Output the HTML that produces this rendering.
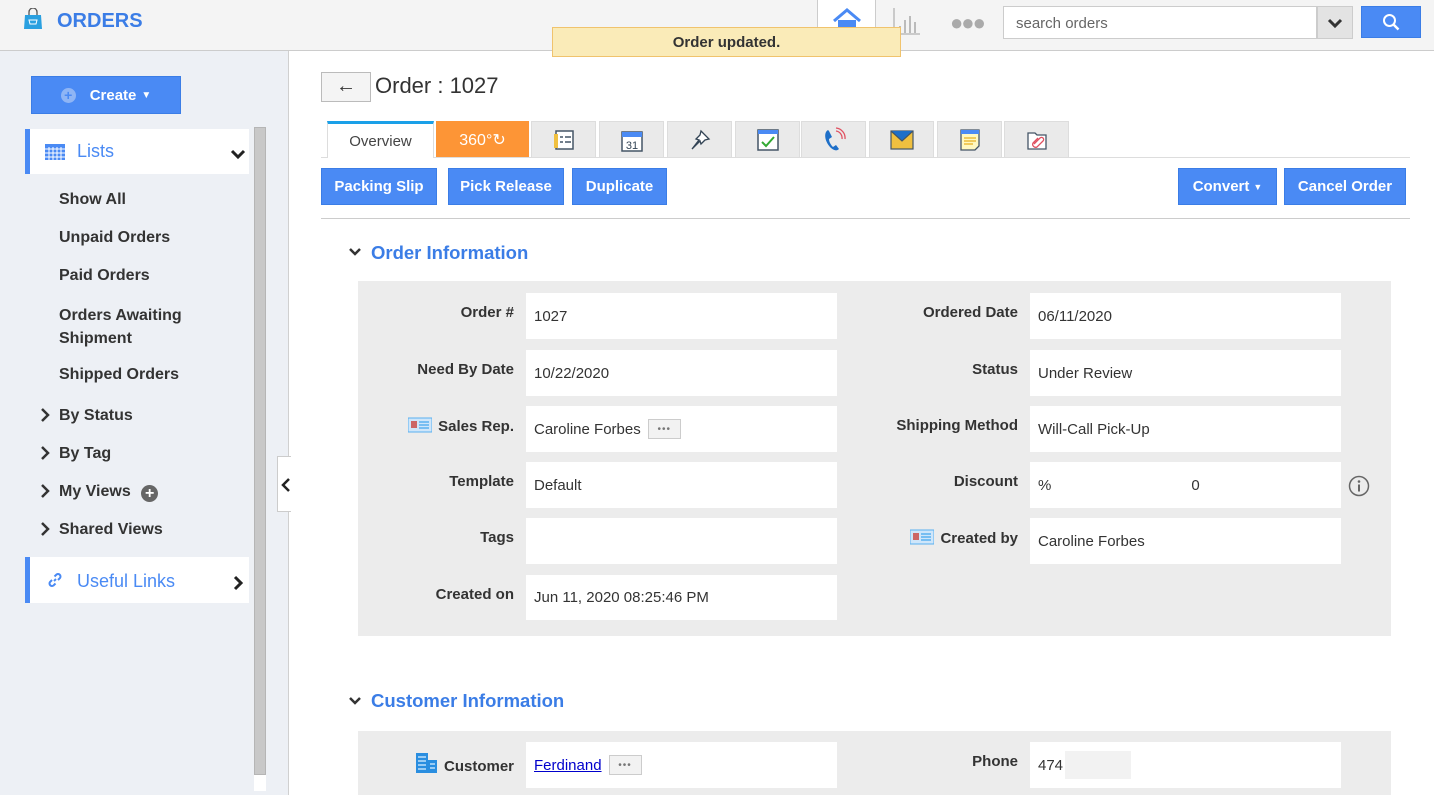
<!DOCTYPE html>
<html><head><meta charset="utf-8"><style>
*{box-sizing:border-box;margin:0;padding:0}
body{width:1434px;height:795px;overflow:hidden;font-family:"Liberation Sans",Arial,sans-serif;background:#fff;position:relative;color:#333}
.a{position:absolute}
.hdr{left:0;top:0;width:1434px;height:51px;background:#f4f4f4;border-bottom:1px solid #ccc}
.side{left:0;top:51px;width:289px;height:744px;background:#edf0f5;border-right:1px solid #d0d0d0}
.btn{position:absolute;background:#4a8af4;border:1px solid #3b7de6;color:#fff;font-weight:bold;font-size:15px;display:flex;align-items:center;justify-content:center}
.nav{position:absolute;left:59px;font-size:16px;font-weight:bold;color:#333}
.chev{position:absolute;left:40px}
.tab{position:absolute;top:121px;height:36px;background:#eaeaea;border:1px solid #ddd;border-bottom:none;display:flex;align-items:center;justify-content:center}
.lbl{position:absolute;font-size:15px;font-weight:bold;color:#333;text-align:right}
.val{position:absolute;background:#fff;font-size:15px;color:#333;padding-left:8px;display:flex;align-items:center}
.dots{display:inline-flex;align-items:center;justify-content:center;width:33px;height:20px;border:1px solid #ccc;background:#f2f2f2;margin-left:7px;font-size:10px;color:#777;letter-spacing:1px}
.sec{position:absolute;left:371px;font-size:18.5px;color:#3b7de6;font-weight:bold}
</style></head><body>
<div class="a hdr"></div>
<svg class="a" style="left:22px;top:8px" width="22" height="22" viewBox="0 0 22 22"><path d="M7 7V4a4 4 0 0 1 8 0v3" fill="none" stroke="#555" stroke-width="1.3"/><path d="M3 7h16l1 14H2z" fill="#2aa0e0"/><path d="M7 12h8l-1 4H8z" fill="none" stroke="#fff" stroke-width="1"/></svg>
<div class="a" style="left:57px;top:10px;font-size:20px;font-weight:bold;color:#3b7de6">ORDERS</div>
<div class="a" style="left:817px;top:0;width:59px;height:50px;background:#fff;border-left:1px solid #ccc;border-right:1px solid #ccc"></div>
<svg class="a" style="left:832px;top:8px" width="30" height="22" viewBox="0 0 30 22"><path d="M2 13L15 2l13 11" fill="none" stroke="#4a8af4" stroke-width="3"/><path d="M6 12h18v10H6z" fill="#4a8af4"/></svg>
<svg class="a" style="left:891px;top:8px" width="30" height="28"><path d="M3 0v26h26" fill="none" stroke="#bbb" stroke-width="1.5"/><path d="M9 18v7M14 12v13M19 8v17M24 14v11" stroke="#bbb" stroke-width="2"/></svg>
<div class="a" style="left:950px;top:10px;font-size:22px;color:#aaa;letter-spacing:-2px">●●●</div>
<div class="a" style="left:1003px;top:6px;width:314px;height:33px;background:#fff;border:1px solid #ccc;font-size:15px;color:#666;padding:8px 12px">search orders</div>
<div class="a" style="left:1317px;top:6px;width:36px;height:33px;background:#e3e3e3;border:1px solid #ccc"></div>
<svg class="a" style="left:1327px;top:17px" width="16" height="12"><path d="M2 3l6 6 6-6" fill="none" stroke="#333" stroke-width="3"/></svg>
<div class="btn" style="left:1361px;top:6px;width:60px;height:32px"><svg width="18" height="18"><circle cx="7.5" cy="7.5" r="5.5" fill="none" stroke="#fff" stroke-width="2"/><path d="M11.5 11.5l5 5" stroke="#fff" stroke-width="2.5"/></svg></div>
<div class="a" style="left:552px;top:27px;width:349px;height:30px;background:#faebb8;border:1px solid #f0c36d;font-size:15px;font-weight:bold;color:#333;text-align:center;line-height:30px">Order updated.</div>

<div class="a side"></div>
<div class="btn" style="left:31px;top:76px;width:150px;height:38px"><span style="display:inline-block;width:15px;height:15px;border-radius:50%;background:#8fb5f5;color:#4a8af4;font-size:14px;line-height:15px;text-align:center;margin-right:14px">+</span>Create <span style="font-size:10px;margin-left:5px">▼</span></div>
<div class="a" style="left:25px;top:129px;width:224px;height:45px;background:#fff;border-left:5px solid #4a8af4"></div>
<svg class="a" style="left:45px;top:144px" width="20" height="16"><rect x="0" y="0" width="20" height="16" fill="#4a8af4"/><path d="M0 5h20M0 9h20M0 13h20M4 3v13M8 3v13M12 3v13M16 3v13" stroke="#fff" stroke-width="1"/></svg>
<div class="a" style="left:77px;top:141px;font-size:18px;color:#4a8af4">Lists</div>
<svg class="a" style="left:230px;top:149px" width="16" height="12"><path d="M2 2l6 6 6-6" fill="none" stroke="#222" stroke-width="3"/></svg>
<div class="nav" style="top:191px">Show All</div>
<div class="nav" style="top:229px">Unpaid Orders</div>
<div class="nav" style="top:267px">Paid Orders</div>
<div class="nav" style="top:304px;line-height:23px">Orders Awaiting<br>Shipment</div>
<div class="nav" style="top:366px">Shipped Orders</div>
<svg class="chev" style="top:408px" width="10" height="14"><path d="M2 1l6 6-6 6" fill="none" stroke="#333" stroke-width="2.5"/></svg>
<div class="nav" style="top:407px">By Status</div>
<svg class="chev" style="top:446px" width="10" height="14"><path d="M2 1l6 6-6 6" fill="none" stroke="#333" stroke-width="2.5"/></svg>
<div class="nav" style="top:445px">By Tag</div>
<svg class="chev" style="top:484px" width="10" height="14"><path d="M2 1l6 6-6 6" fill="none" stroke="#333" stroke-width="2.5"/></svg>
<div class="nav" style="top:483px">My Views <span style="display:inline-block;width:17px;height:17px;border-radius:50%;background:#666;color:#fff;text-align:center;line-height:17px;font-size:16px;margin-left:6px;vertical-align:-2px">+</span></div>
<svg class="chev" style="top:522px" width="10" height="14"><path d="M2 1l6 6-6 6" fill="none" stroke="#333" stroke-width="2.5"/></svg>
<div class="nav" style="top:521px">Shared Views</div>
<div class="a" style="left:25px;top:557px;width:224px;height:46px;background:#fff;border-left:5px solid #4a8af4"></div>
<svg class="a" style="left:46px;top:571px" width="18" height="18"><path d="M8 10l2-2M6 9l-2 2a2.5 2.5 0 0 0 3.5 3.5l2-2M12 9l2-2a2.5 2.5 0 0 0-3.5-3.5l-2 2" fill="none" stroke="#4a8af4" stroke-width="2"/></svg>
<div class="a" style="left:77px;top:571px;font-size:18px;color:#4a8af4">Useful Links</div>
<svg class="a" style="left:233px;top:575px" width="12" height="16"><path d="M2 2l6 6-6 6" fill="none" stroke="#222" stroke-width="3"/></svg>
<div class="a" style="left:254px;top:127px;width:12px;height:648px;background:#c8c8c8;border:1px solid #b5b5b5"></div>
<div class="a" style="left:254px;top:775px;width:12px;height:16px;background:#fff"></div>
<div class="a" style="left:277px;top:456px;width:14px;height:56px;background:#fff;border:1px solid #ccc;border-right:none"></div>
<svg class="a" style="left:281px;top:478px" width="10" height="14"><path d="M8 1L2 7l6 6" fill="none" stroke="#222" stroke-width="2.5"/></svg>

<div class="a" style="left:321px;top:72px;width:50px;height:30px;background:#f4f4f4;border:1px solid #bbb;font-size:20px;text-align:center;line-height:26px">←</div>
<div class="a" style="left:375px;top:73px;font-size:22px;color:#333">Order : 1027</div>

<div class="a" style="left:321px;top:157px;width:1089px;height:1px;background:#ddd"></div>
<div class="tab" style="left:327px;width:107px;background:#fff;border-top:3px solid #1aa0e8;height:37px;font-size:15px;color:#444">Overview</div>
<div class="tab" style="left:436px;width:93px;background:#fd9536;border-color:#fd9536;color:#fff;font-size:16px">360°↻</div>
<div class="tab" style="left:531px;width:65px"><svg width="22" height="22"><rect x="3" y="2" width="17" height="18" fill="#fff" stroke="#456" stroke-width="1.5"/><rect x="1" y="5" width="4" height="14" fill="#f0c040"/><path d="M7 8h3M12 8h6M7 13h3M12 13h6" stroke="#456" stroke-width="1.5"/></svg></div>
<div class="tab" style="left:599px;width:65px"><svg width="22" height="24"><rect x="1" y="4" width="20" height="19" fill="#fff" stroke="#456" stroke-width="1.5"/><rect x="1" y="4" width="20" height="5" fill="#4a8af4"/><text x="11" y="21" font-size="11" text-anchor="middle" fill="#345" font-family="Liberation Sans">31</text></svg></div>
<div class="tab" style="left:667px;width:65px"><svg width="22" height="22"><path d="M12 2l8 8-4 1-4 4-1-3-8 8 7-9-3-1 4-4z" fill="#fff" stroke="#345" stroke-width="1.3"/></svg></div>
<div class="tab" style="left:735px;width:65px"><svg width="22" height="24"><rect x="1" y="2" width="20" height="20" fill="#fff" stroke="#456" stroke-width="1.5"/><rect x="1" y="2" width="20" height="4" fill="#4a8af4"/><path d="M5 14l4 4 8-9" fill="none" stroke="#3a3" stroke-width="2"/></svg></div>
<div class="tab" style="left:801px;width:65px"><svg width="24" height="26"><path d="M6 3c-4 2-4 10 2 17 4 4 7 4 9 2l-3-4-3 2c-2-2-4-5-4-8l3-2-3-6z" fill="#1e6fc8"/><path d="M14 4a7 7 0 0 1 6 8M14 1a10 10 0 0 1 9 11" fill="none" stroke="#e05060" stroke-width="1.3"/></svg></div>
<div class="tab" style="left:869px;width:65px"><svg width="24" height="20"><rect x="1" y="1" width="22" height="18" fill="#f0c040" stroke="#456" stroke-width="1.2"/><path d="M1 1l11 10L23 1" fill="#1e6fc8" stroke="#456" stroke-width="1.2"/></svg></div>
<div class="tab" style="left:937px;width:65px"><svg width="22" height="24"><path d="M2 2h18v16l-4 4H2z" fill="#fff8c0" stroke="#456" stroke-width="1.3"/><rect x="2" y="2" width="18" height="4" fill="#4a8af4"/><path d="M5 10h12M5 13h12M5 16h9" stroke="#e8b020" stroke-width="1.3"/></svg></div>
<div class="tab" style="left:1004px;width:65px"><svg width="22" height="22"><path d="M2 4h7l2 2h9v14H2z" fill="#fff" stroke="#456" stroke-width="1.3"/><path d="M8 15l6-6a2 2 0 0 1 3 3l-6 6a3 3 0 0 1-4-4l5-5" fill="none" stroke="#e05060" stroke-width="1.3"/></svg></div>

<div class="btn" style="left:321px;top:168px;width:116px;height:37px">Packing Slip</div>
<div class="btn" style="left:448px;top:168px;width:116px;height:37px">Pick Release</div>
<div class="btn" style="left:572px;top:168px;width:95px;height:37px">Duplicate</div>
<div class="btn" style="left:1178px;top:168px;width:99px;height:37px">Convert <span style="font-size:9px;margin-left:4px">▼</span></div>
<div class="btn" style="left:1284px;top:168px;width:122px;height:37px">Cancel Order</div>
<div class="a" style="left:321px;top:218px;width:1089px;height:1px;background:#ccc"></div>

<svg class="a" style="left:348px;top:247px" width="14" height="10"><path d="M2 2l5 5 5-5" fill="none" stroke="#333" stroke-width="2.5"/></svg>
<div class="sec" style="top:242px">Order Information</div>
<div class="a" style="left:358px;top:281px;width:1033px;height:355px;background:#ececec"></div>

<div class="lbl" style="left:380px;width:134px;top:304px">Order #</div>
<div class="val" style="left:526px;top:293px;width:311px;height:46px">1027</div>
<div class="lbl" style="left:380px;width:134px;top:361px">Need By Date</div>
<div class="val" style="left:526px;top:350px;width:311px;height:46px">10/22/2020</div>
<div class="lbl" style="left:380px;width:134px;top:417px"><svg width="24" height="16" style="vertical-align:-2px;margin-right:6px"><rect x="0" y="1" width="24" height="14" fill="#cfe6fa" stroke="#5ab0f0"/><rect x="3" y="4" width="6" height="7" fill="#c66"/><path d="M11 5h10M11 8h10M11 11h10" stroke="#5ab0f0" stroke-width="1.5"/></svg>Sales Rep.</div>
<div class="val" style="left:526px;top:406px;width:311px;height:46px">Caroline Forbes<span class="dots">•••</span></div>
<div class="lbl" style="left:380px;width:134px;top:473px">Template</div>
<div class="val" style="left:526px;top:462px;width:311px;height:46px">Default</div>
<div class="lbl" style="left:380px;width:134px;top:529px">Tags</div>
<div class="val" style="left:526px;top:518px;width:311px;height:46px"></div>
<div class="lbl" style="left:380px;width:134px;top:586px">Created on</div>
<div class="val" style="left:526px;top:575px;width:311px;height:45px">Jun 11, 2020 08:25:46 PM</div>

<div class="lbl" style="left:860px;width:158px;top:304px">Ordered Date</div>
<div class="val" style="left:1030px;top:293px;width:311px;height:46px">06/11/2020</div>
<div class="lbl" style="left:860px;width:158px;top:361px">Status</div>
<div class="val" style="left:1030px;top:350px;width:311px;height:46px">Under Review</div>
<div class="lbl" style="left:860px;width:158px;top:417px">Shipping Method</div>
<div class="val" style="left:1030px;top:406px;width:311px;height:46px">Will-Call Pick-Up</div>
<div class="lbl" style="left:860px;width:158px;top:473px">Discount</div>
<div class="val" style="left:1030px;top:462px;width:311px;height:46px">%<span style="margin-left:140px">0</span></div>
<svg class="a" style="left:1348px;top:475px" width="22" height="22"><circle cx="11" cy="11" r="9.5" fill="none" stroke="#666" stroke-width="1.5"/><circle cx="11" cy="6.5" r="1.3" fill="#666"/><path d="M11 9.5v7" stroke="#666" stroke-width="2"/></svg>
<div class="lbl" style="left:860px;width:158px;top:529px"><svg width="24" height="16" style="vertical-align:-2px;margin-right:6px"><rect x="0" y="1" width="24" height="14" fill="#cfe6fa" stroke="#5ab0f0"/><rect x="3" y="4" width="6" height="7" fill="#c66"/><path d="M11 5h10M11 8h10M11 11h10" stroke="#5ab0f0" stroke-width="1.5"/></svg>Created by</div>
<div class="val" style="left:1030px;top:518px;width:311px;height:46px">Caroline Forbes</div>

<svg class="a" style="left:348px;top:696px" width="14" height="10"><path d="M2 2l5 5 5-5" fill="none" stroke="#333" stroke-width="2.5"/></svg>
<div class="sec" style="top:690px">Customer Information</div>
<div class="a" style="left:358px;top:731px;width:1033px;height:64px;background:#ececec"></div>
<div class="lbl" style="left:380px;width:134px;top:752px"><svg width="24" height="22" style="vertical-align:-3px;margin-right:6px"><rect x="2" y="1" width="12" height="20" fill="#2a8ee0"/><rect x="14" y="8" width="9" height="13" fill="#2a8ee0"/><path d="M4 5h8M4 9h8M4 13h8M4 17h8M16 12h5M16 16h5" stroke="#bfe0fa" stroke-width="1.5"/></svg>Customer</div>
<div class="val" style="left:526px;top:742px;width:311px;height:46px"><span style="color:#00c;text-decoration:underline">Ferdinand</span><span class="dots">•••</span></div>
<div class="lbl" style="left:860px;width:158px;top:753px">Phone</div>
<div class="val" style="left:1030px;top:742px;width:311px;height:46px">474<span style="display:inline-block;width:66px;height:28px;background:#f2f2f2;margin-left:2px"></span></div>
</body></html>
